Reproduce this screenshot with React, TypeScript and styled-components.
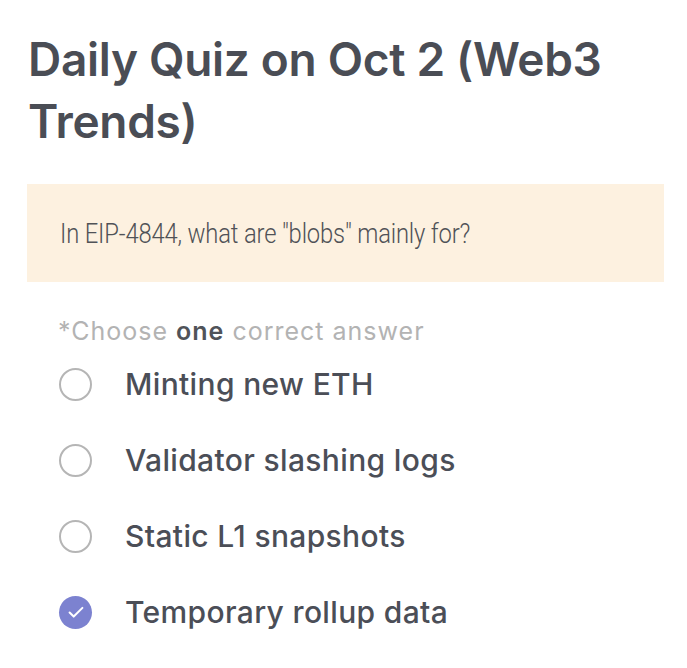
import React from "react";
import styled, { createGlobalStyle } from "styled-components";

const Global = createGlobalStyle`
  html, body { margin: 0; padding: 0; background: #ffffff; }
  body { font-family: Inter, "Noto Sans", sans-serif; }
`;

const Page = styled.div`
  width: 687px;
  height: 668px;
  box-sizing: border-box;
  padding: 28px 23px 0 27px;
  display: flex;
  flex-direction: column;
`;

const Title = styled.h1`
  margin: 0;
  padding-left: 1px;
  font-family: Inter, sans-serif;
  font-weight: 600;
  font-size: 46px;
  line-height: 62px;
  letter-spacing: -0.3px;
  color: #4a4d55;
`;

const QuestionBox = styled.div`
  margin-top: 32px;
  height: 98px;
  background: #fdf1e0;
  display: flex;
  align-items: center;
  padding-left: 33px;
`;

const QuestionText = styled.span`
  display: inline-block;
  font-family: Roboto, sans-serif;
  font-weight: 300;
  font-size: 28px;
  letter-spacing: -0.2px;
  color: #505257;
  white-space: nowrap;
  transform: scaleX(0.85);
  transform-origin: left center;
`;

const Hint = styled.div`
  margin-top: 34px;
  padding-left: 31px;
  font-family: Inter, sans-serif;
  font-size: 25px;
  line-height: 30px;
  letter-spacing: 1px;
  color: #b3b3b3;
`;

const Strong = styled.b`
  font-weight: 600;
  color: #505359;
`;

const Options = styled.ul`
  list-style: none;
  margin: 21px 0 0;
  padding: 0 0 0 32px;
  display: flex;
  flex-direction: column;
  gap: 42px;
`;

const Option = styled.li`
  display: flex;
  align-items: center;
  gap: 33px;
  height: 34px;
`;

const Radio = styled.span<{ $checked?: boolean }>`
  width: 33px;
  height: 33px;
  box-sizing: border-box;
  border-radius: 50%;
  flex: none;
  display: flex;
  align-items: center;
  justify-content: center;
  border: ${(p) => (p.$checked ? "none" : "2.5px solid #b5b5b5")};
  background: ${(p) => (p.$checked ? "#7c82d0" : "transparent")};
`;

const Label = styled.span`
  font-family: Inter, sans-serif;
  font-weight: 500;
  font-size: 30px;
  letter-spacing: 0.35px;
  color: #4b4e57;
`;

const options = [
  { label: "Minting new ETH", checked: false },
  { label: "Validator slashing logs", checked: false },
  { label: "Static L1 snapshots", checked: false },
  { label: "Temporary rollup data", checked: true },
];

export default function App() {
  return (
    <>
      <Global />
      <Page>
        <Title>Daily Quiz on Oct 2 (Web3 Trends)</Title>
        <QuestionBox>
          <QuestionText>In EIP-4844, what are "blobs" mainly for?</QuestionText>
        </QuestionBox>
        <Hint>
          *Choose <Strong>one</Strong> correct answer
        </Hint>
        <Options>
          {options.map((o) => (
            <Option key={o.label}>
              <Radio $checked={o.checked}>
                {o.checked && (
                  <svg width="22" height="22" viewBox="0 0 24 24" fill="none">
                    <path d="M5 12.5l4.5 4.5L19 7.5" stroke="#fff" strokeWidth="2.2" strokeLinecap="round" strokeLinejoin="round" />
                  </svg>
                )}
              </Radio>
              <Label>{o.label}</Label>
            </Option>
          ))}
        </Options>
      </Page>
    </>
  );
}
